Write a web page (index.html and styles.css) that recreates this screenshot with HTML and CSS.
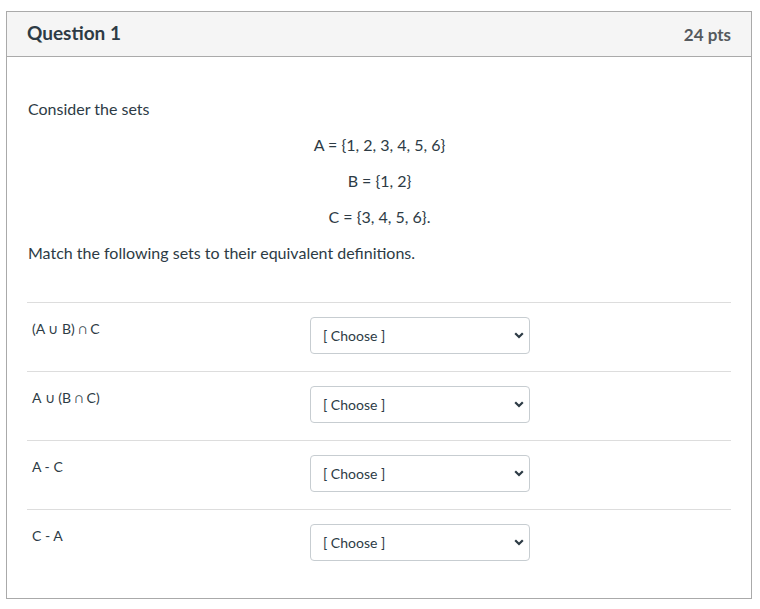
FILE: index.html
```html
<!DOCTYPE html>
<html lang="en">
<head>
<meta charset="utf-8">
<title>Question 1</title>
<link rel="stylesheet" href="styles.css">
</head>
<body>
<div class="question">
  <div class="q-header">
    <h2 class="q-title">Question 1</h2>
    <span class="q-points">24 pts</span>
  </div>
  <div class="q-body">
    <p>Consider the sets</p>
    <p class="center">A = {1, 2, 3, 4, 5, 6}</p>
    <p class="center">B = {1, 2}</p>
    <p class="center">C = {3, 4, 5, 6}.</p>
    <p>Match the following sets to their equivalent definitions.</p>
    <div class="answers">
      <div class="answer-row">
        <div class="answer-label">(A ∪ B) ∩ C</div>
        <div class="select-wrap">
          <select class="choose"><option>[ Choose ]</option></select>
          <svg class="chev" width="10" height="7" viewBox="0 0 10 7"><path d="M1.2 1.2 L5 5 L8.8 1.2" fill="none" stroke="#2d3b45" stroke-width="2.2"/></svg>
        </div>
      </div>
      <div class="answer-row">
        <div class="answer-label">A ∪ (B ∩ C)</div>
        <div class="select-wrap">
          <select class="choose"><option>[ Choose ]</option></select>
          <svg class="chev" width="10" height="7" viewBox="0 0 10 7"><path d="M1.2 1.2 L5 5 L8.8 1.2" fill="none" stroke="#2d3b45" stroke-width="2.2"/></svg>
        </div>
      </div>
      <div class="answer-row">
        <div class="answer-label">A - C</div>
        <div class="select-wrap">
          <select class="choose"><option>[ Choose ]</option></select>
          <svg class="chev" width="10" height="7" viewBox="0 0 10 7"><path d="M1.2 1.2 L5 5 L8.8 1.2" fill="none" stroke="#2d3b45" stroke-width="2.2"/></svg>
        </div>
      </div>
      <div class="answer-row">
        <div class="answer-label">C - A</div>
        <div class="select-wrap">
          <select class="choose"><option>[ Choose ]</option></select>
          <svg class="chev" width="10" height="7" viewBox="0 0 10 7"><path d="M1.2 1.2 L5 5 L8.8 1.2" fill="none" stroke="#2d3b45" stroke-width="2.2"/></svg>
        </div>
      </div>
    </div>
  </div>
</div>
</body>
</html>
```
FILE: styles.css
```css
html, body {
  margin: 0;
  padding: 0;
  background: #fff;
}
body {
  padding: 11px 8px 0 6px;
  font-family: Lato, "Open Sans", "Liberation Sans", sans-serif;
  color: #2d3b45;
}
.question {
  width: 744px;
  height: 586px;
  border: 1px solid #aaaaaa;
  display: flex;
  flex-direction: column;
}
.q-header {
  height: 44px;
  background: #f5f5f5;
  border-bottom: 1px solid #aaaaaa;
  display: flex;
  align-items: center;
  justify-content: space-between;
  padding: 0 20px 0 20px;
}
.q-title {
  margin: 0 0 4px 0;
  font-size: 19px;
  font-weight: 700;
  color: #2d3b45;
}
.q-points {
  font-size: 17px;
  font-weight: 700;
  color: #555a5e;
  margin-top: 0;
}
.q-body {
  padding: 40px 20px 0 21px;
  font-size: 16px;
  line-height: 24px;
}
.q-body p {
  margin: 0 0 12px 0;
}
.q-body p.center {
  text-align: center;
}
.answers {
  margin-top: 37px;
  margin-left: -1px;
}
.answer-row {
  border-top: 1px solid #dddddd;
  display: grid;
  grid-template-columns: 283px 1fr;
  padding: 14px 0 17px 0;
}
.answer-label {
  font-size: 14px;
  line-height: 20px;
  padding-left: 5px;
  padding-top: 2px;
}
.select-wrap {
  position: relative;
  width: 220px;
  height: 37px;
}
.choose {
  appearance: none;
  -webkit-appearance: none;
  width: 220px;
  height: 37px;
  border: 1px solid #c7cdd1;
  border-radius: 4px;
  background: #fff;
  font-family: Lato, "Open Sans", "Liberation Sans", sans-serif;
  font-size: 14px;
  color: #2d3b45;
  padding: 0 12px;
  margin: 0;
}
.chev {
  position: absolute;
  right: 6px;
  top: 15px;
  pointer-events: none;
}
```
